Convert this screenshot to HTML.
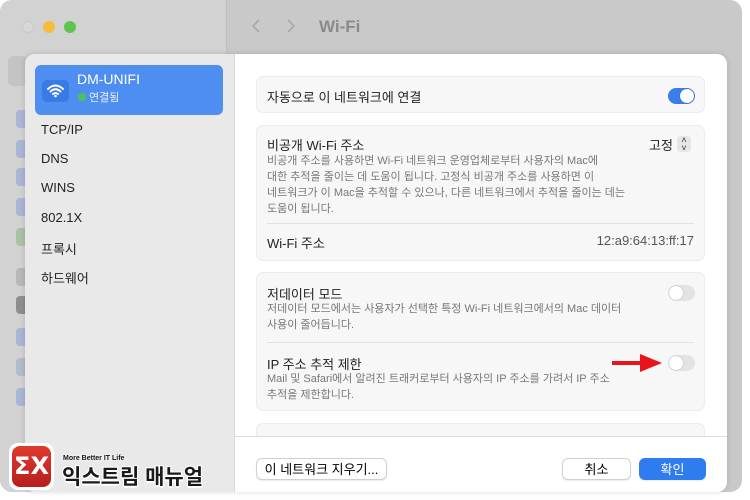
<!DOCTYPE html>
<html><head><meta charset="utf-8"><style>
*{margin:0;padding:0;box-sizing:border-box}
body{width:750px;height:500px;overflow:hidden;background:#fff;font-family:"Liberation Sans","Noto Sans CJK KR",sans-serif;position:relative}
.win{position:absolute;left:0;top:0;width:742px;height:492px;background:#c9c9c9;border-radius:12px 12px 12px 12px;overflow:hidden}
.lside{position:absolute;left:0;top:0;width:227px;height:500px;background:#d2d2d2;border-right:1px solid #c0c0c0}
.dot{position:absolute;top:21px;width:12px;height:12px;border-radius:50%}
.sico{position:absolute;left:16px;width:14px;height:18px;border-radius:4px;background:#a9b6d6}
.sheet{position:absolute;left:25px;top:54px;width:702px;height:438px;background:#fff;border-radius:10px;overflow:hidden;box-shadow:0 0 6px rgba(0,0,0,.15)}
.side{position:absolute;left:0;top:0;width:210px;height:438px;background:#e9e9e9;border-right:1px solid #d8d8d8}
.sel{position:absolute;left:10px;top:11px;width:188px;height:50px;background:#4f8ef1;border-radius:6px;color:#fff}
.item{position:absolute;left:16px;font-size:13px;color:#222}
.card{position:absolute;left:231px;width:449px;background:#f7f7f7;border:1px solid #ececec;border-radius:7px}
.t{position:absolute;font-size:13px;color:#222}
.d{position:absolute;font-size:11px;color:#777;line-height:16px}
.tog{position:absolute;width:27px;height:16px;border-radius:8px}
.tog i{position:absolute;top:1px;width:14px;height:14px;border-radius:50%;background:#fff;box-shadow:0 0 1px rgba(0,0,0,.4)}
.btn{position:absolute;top:404px;height:22px;border-radius:6px;font-size:13px;text-align:center;line-height:21px;background:#fff;border:1px solid #d0d0d0;box-shadow:0 1px 1px rgba(0,0,0,.08)}
</style></head><body>
<div class="win">
<div class="lside">
<div class="dot" style="left:22px;background:#d8d8d8;border:1px solid #c8c8c8"></div>
<div class="dot" style="left:43px;background:#f7bd3a"></div>
<div class="dot" style="left:64px;background:#5ec34f"></div>
<div style="position:absolute;left:8px;top:56px;width:20px;height:30px;background:#c4c4c4;border-radius:5px"></div>
<div class="sico" style="top:110px"></div><div class="sico" style="top:140px"></div><div class="sico" style="top:168px"></div><div class="sico" style="top:198px"></div><div class="sico" style="top:228px;background:#a9c2a4"></div><div class="sico" style="top:268px;background:#b8b8b8"></div><div class="sico" style="top:296px;background:#8e8e8e"></div><div class="sico" style="top:328px"></div><div class="sico" style="top:358px;background:#b4bccc"></div><div class="sico" style="top:388px"></div>
</div>
<svg style="position:absolute;left:250px;top:18px" width="50" height="16"><path d="M9 2L3 8L9 14M38 2L44 8L38 14" stroke="#a8a8a8" stroke-width="1.6" fill="none"/></svg>
<div style="position:absolute;left:319px;top:17px;font-size:17px;font-weight:bold;color:#8a8a8a">Wi-Fi</div>
</div>
<div class="sheet">
<div class="side">
<div class="sel">
<div style="position:absolute;left:7px;top:15px;width:27px;height:22px;background:#3a7ae6;border-radius:5px"></div>
<svg style="position:absolute;left:11px;top:18px" width="19" height="15" viewBox="0 0 19 15"><path d="M2 6 Q9.5 -1 17 6M4.5 8.5Q9.5 4 14.5 8.5M7 11Q9.5 9 12 11" stroke="#fff" stroke-width="2" fill="none" stroke-linecap="round"/><circle cx="9.5" cy="13" r="1.3" fill="#fff"/></svg>
<div style="position:absolute;left:42px;top:6px;font-size:14px">DM-UNIFI</div>
<div style="position:absolute;left:43px;top:28px;width:8px;height:8px;border-radius:50%;background:#4cc35a"></div>
<div style="position:absolute;left:54px;top:24px;font-size:11px;color:#e8efff">연결됨</div>
</div>
<div class="item" style="top:68px">TCP/IP</div>
<div class="item" style="top:97px">DNS</div>
<div class="item" style="top:126px">WINS</div>
<div class="item" style="top:156px">802.1X</div>
<div class="item" style="top:185px">프록시</div>
<div class="item" style="top:214px">하드웨어</div>
</div>
<div class="card" style="top:22px;height:37px"><div class="t" style="left:10px;top:10px">자동으로 이 네트워크에 연결</div>
<div class="tog" style="left:411px;top:11px;background:#3b7ee8"><i style="left:12px"></i></div></div>
<div class="card" style="top:71px;height:136px">
<div class="t" style="left:10px;top:9px">비공개 Wi-Fi 주소</div>
<div class="t" style="left:392px;top:9px">고정</div>
<div style="position:absolute;left:420px;top:10px;width:14px;height:16px;background:#e6e6e6;border-radius:3px;font-size:9px;text-align:center;line-height:8px;color:#333">&#x2C4;<br>&#x2C5;</div>
<div class="d" style="left:10px;top:27px;width:410px">비공개 주소를 사용하면 Wi-Fi 네트워크 운영업체로부터 사용자의 Mac에<br>대한 추적을 줄이는 데 도움이 됩니다. 고정식 비공개 주소를 사용하면 이<br>네트워크가 이 Mac을 추적할 수 있으나, 다른 네트워크에서 추적을 줄이는 데는<br>도움이 됩니다.</div>
<div style="position:absolute;left:10px;right:10px;top:97px;border-top:1px solid #e2e2e2"></div>
<div class="t" style="left:10px;top:107px">Wi-Fi 주소</div>
<div class="t" style="right:10px;top:107px;color:#555">12:a9:64:13:ff:17</div>
</div>
<div class="card" style="top:218px;height:139px">
<div class="t" style="left:10px;top:11px">저데이터 모드</div>
<div class="tog" style="left:411px;top:12px;background:#e3e3e3"><i style="left:1px"></i></div>
<div class="d" style="left:10px;top:28px">저데이터 모드에서는 사용자가 선택한 특정 Wi-Fi 네트워크에서의 Mac 데이터<br>사용이 줄어듭니다.</div>
<div style="position:absolute;left:10px;right:10px;top:69px;border-top:1px solid #e2e2e2"></div>
<div class="t" style="left:10px;top:81px">IP 주소 추적 제한</div>
<div class="tog" style="left:411px;top:82px;background:#e3e3e3"><i style="left:1px"></i></div>
<div class="d" style="left:10px;top:98px">Mail 및 Safari에서 알려진 트래커로부터 사용자의 IP 주소를 가려서 IP 주소<br>추적을 제한합니다.</div>
</div>
<svg style="position:absolute;left:587px;top:299px" width="50" height="20"><rect x="0" y="8" width="30" height="4" fill="#e8141b"/><path d="M28 1 L50 10 L28 19Z" fill="#e8141b"/></svg>
<div class="card" style="top:369px;height:40px"></div>
<div style="position:absolute;left:210px;top:382px;width:492px;height:56px;background:#fff;border-top:1px solid #dcdcdc"></div>
<div class="btn" style="left:231px;width:131px">이 네트워크 지우기...</div>
<div class="btn" style="left:537px;width:69px">취소</div>
<div class="btn" style="left:614px;width:67px;background:#2f7bf0;border-color:#2f7bf0;color:#fff">확인</div>
</div>
<div style="position:absolute;left:9px;top:443px;width:45px;height:47px;background:#fff;border-radius:9px"></div>
<div style="position:absolute;left:12px;top:446px;width:39px;height:41px;background:linear-gradient(#e03a2e,#b51f1f);border-radius:8px;color:#fff;font-weight:bold;font-size:24px;text-align:center;line-height:40px;font-family:'DejaVu Sans',sans-serif">ΣX</div>
<div style="position:absolute;left:63px;top:455px;font-size:7px;font-weight:bold;color:#111;text-shadow:0 0 2px #fff,0 0 2px #fff">More Better IT Life</div>
<div style="position:absolute;left:62px;top:461px;font-size:21px;font-weight:bold;color:#1a1a1a;text-shadow:1px 1px 0 #fff,-1px -1px 0 #fff,1px -1px 0 #fff,-1px 1px 0 #fff,0 2px 0 #fff">익스트림 매뉴얼</div>
</body></html>
